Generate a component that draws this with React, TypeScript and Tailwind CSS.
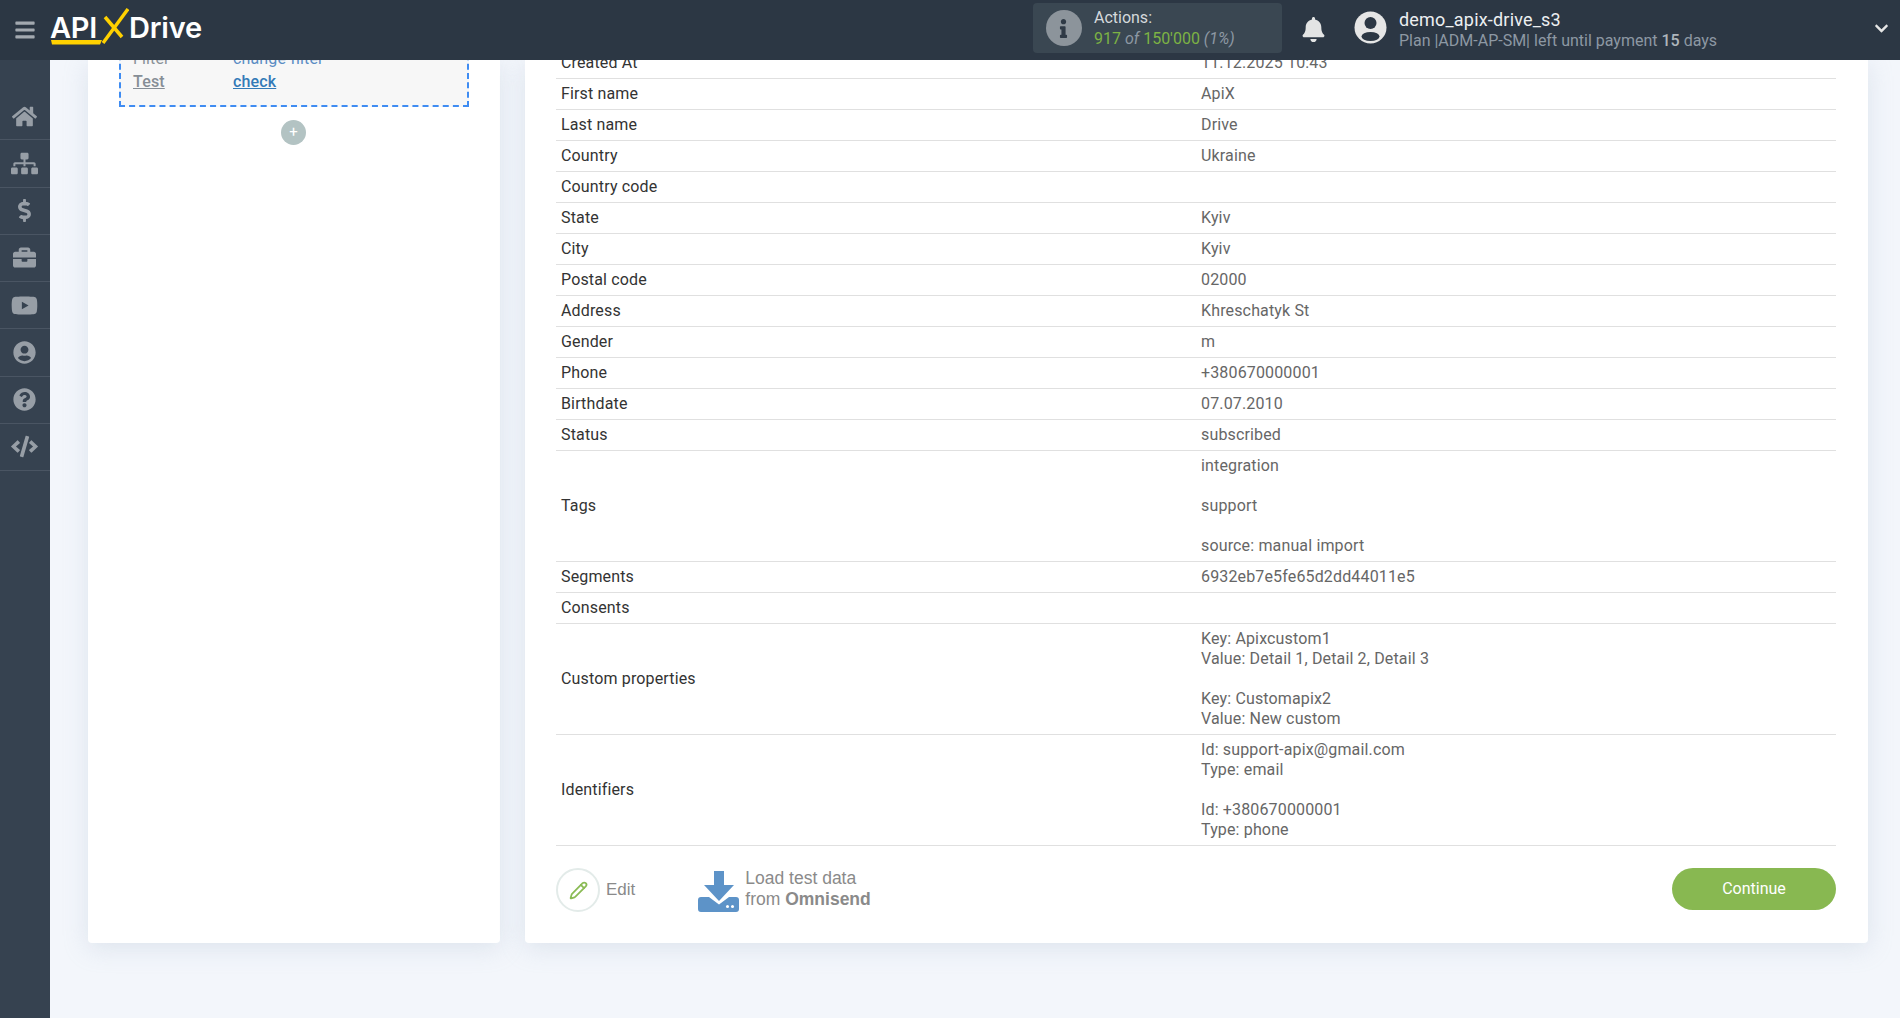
import React from 'react';
import {
  FaBars,
  FaBell,
  FaBriefcase,
  FaChevronDown,
  FaCode,
  FaDollarSign,
  FaHome,
  FaInfo,
  FaQuestionCircle,
  FaSitemap,
  FaUserCircle,
  FaYoutube,
} from 'react-icons/fa';
import { Pencil } from 'lucide-react';

const navItems = [
  { icon: FaHome, size: 25 },
  { icon: FaSitemap, size: 27 },
  { icon: FaDollarSign, size: 23 },
  { icon: FaBriefcase, size: 23 },
  { icon: FaYoutube, size: 27 },
  { icon: FaUserCircle, size: 23 },
  { icon: FaQuestionCircle, size: 23 },
  { icon: FaCode, size: 27 },
];

const rows: { label: string; value?: string[] }[] = [
  { label: 'Created At', value: ['11.12.2025 10:43'] },
  { label: 'First name', value: ['ApiX'] },
  { label: 'Last name', value: ['Drive'] },
  { label: 'Country', value: ['Ukraine'] },
  { label: 'Country code' },
  { label: 'State', value: ['Kyiv'] },
  { label: 'City', value: ['Kyiv'] },
  { label: 'Postal code', value: ['02000'] },
  { label: 'Address', value: ['Khreschatyk St'] },
  { label: 'Gender', value: ['m'] },
  { label: 'Phone', value: ['+380670000001'] },
  { label: 'Birthdate', value: ['07.07.2010'] },
  { label: 'Status', value: ['subscribed'] },
  { label: 'Tags', value: ['integration', '', 'support', '', 'source: manual import'] },
  { label: 'Segments', value: ['6932eb7e5fe65d2dd44011e5'] },
  { label: 'Consents' },
  { label: 'Custom properties', value: ['Key: Apixcustom1', 'Value: Detail 1, Detail 2, Detail 3', '', 'Key: Customapix2', 'Value: New custom'] },
  { label: 'Identifiers', value: ['Id: support-apix@gmail.com', 'Type: email', '', 'Id: +380670000001', 'Type: phone'] },
];

const Logo = () => (
  <div className="relative flex items-center h-[60px] pb-[5px] font-['Inter',sans-serif] font-semibold text-[29px] text-white">
    <span className="relative w-[52px] tracking-[-0.3px]">
      API
      <svg className="absolute left-0 top-[34px]" width="52" height="5" viewBox="0 0 52 5">
        <polygon points="1,0 52,0 50,4.500 2,4.500" fill="#ffd100" />
      </svg>
    </span>
    <svg className="shrink-0 self-start mt-[8px]" width="27" height="36" viewBox="0 0 27 36">
      <path d="M1 35 L26 1" stroke="#ffd100" strokeWidth="3.500" fill="none" />
      <path d="M3 9 L20 29" stroke="#ffd100" strokeWidth="3.500" fill="none" />
    </svg>
    <span className="tracking-[-0.2px]">Drive</span>
  </div>
);

const UserAvatar = () => (
  <svg width="33" height="33" viewBox="0 0 33 33" className="shrink-0">
    <circle cx="16.500" cy="16.500" r="16" fill="#e6e6e6" />
    <ellipse cx="16.500" cy="12" rx="6" ry="6" fill="#2c3744" />
    <ellipse cx="16.500" cy="25.500" rx="9" ry="4.500" fill="#2c3744" />
  </svg>
);

const DownloadIcon = () => (
  <svg width="41" height="41" viewBox="0 0 41 41" className="shrink-0">
    <path d="M0 29 a3 3 0 0 1 3 -3 h8 l10 7.500 l10 -7.500 h7 a3 3 0 0 1 3 3 v9 a3 3 0 0 1 -3 3 h-35 a3 3 0 0 1 -3 -3 z" fill="#5d93c8" />
    <path d="M16 0 h10 v14 h10 l-15 16 l-15 -16 h10 z" fill="#5d93c8" />
    <circle cx="29.500" cy="35.500" r="1.500" fill="#fff" />
    <circle cx="34.500" cy="35.500" r="1.500" fill="#fff" />
  </svg>
);

export default function App() {
  return (
    <div className="h-screen w-full overflow-hidden flex flex-col bg-[#f3f6fb] font-['Roboto',sans-serif]">
      <header className="h-[60px] shrink-0 flex items-center bg-[#2c3744] relative z-10">
        <button className="w-[50px] flex justify-center text-[#a3a9b0] pr-[1px]">
          <FaBars size={22} />
        </button>
        <Logo />

        <div className="ml-[831px] w-[249px] h-[50px] -mt-[4px] rounded-[4px] bg-[#3a4752] flex items-center pl-[13px]">
          <div className="w-[36px] h-[36px] rounded-full bg-[#8c949b] flex items-center justify-center text-[#2f3a46]">
            <FaInfo size={19} />
          </div>
          <div className="ml-[12px] text-[16px] leading-[21px]">
            <div className="text-[#d5d9dc]">Actions:</div>
            <div className="text-[#7db244]">
              917 <span className="italic text-[#8d98a3]">of</span> 150'000 <span className="italic text-[#8d98a3]">(1%)</span>
            </div>
          </div>
        </div>

        <div className="ml-[19px] text-[#e3e4e4] -mt-[1px]">
          <FaBell size={25} />
        </div>

        <div className="ml-[28px] -mt-[6px]">
          <UserAvatar />
        </div>
        <div className="ml-[12px] -mt-[1px]">
          <div className="text-[18px] leading-[21px] tracking-[0.2px] text-[#eceff1]">demo_apix-drive_s3</div>
          <div className="text-[16px] leading-[21px] text-[#8d98a3]">
            Plan |ADM-AP-SM| left until payment <b className="font-medium text-[#aeb5bc]">15</b> days
          </div>
        </div>
        <div className="ml-auto mr-[11px] text-[#e6e6e6] -mt-[4px]">
          <FaChevronDown size={15} />
        </div>
      </header>

      <div className="flex-1 min-h-0 flex">
        <aside className="w-[50px] shrink-0 bg-[#364250] pt-[33px]">
          {navItems.map(({ icon: Icon, size }, i) => (
            <div key={i} className="h-[47.25px] flex items-center justify-center border-b border-[#4a5563] text-[#979ea6] pr-[1px]">
              <Icon size={size} />
            </div>
          ))}
        </aside>

        <main className="flex-1 min-w-0 flex gap-[25px] pl-[38px] pr-[32px] pb-[75px] overflow-hidden">
          <section className="w-[412px] shrink-0 bg-white rounded-b-[4px] shadow-[0_5px_25px_rgba(170,185,205,0.3)] px-[31px] text-[16px] tracking-[0.15px]">
            <div className="-mt-[15px] w-[350px] h-[62px] border-2 border-dashed border-[#3f8cf2] bg-[#f7f7f7] pl-[12px]">
              <div className="flex h-[23px] items-center text-[#8a9298]">
                <span className="w-[100px]">Filter</span>
                <span className="text-[#5b8dc4]">change filter</span>
              </div>
              <div className="flex h-[23px] items-center font-medium">
                <span className="w-[100px] underline text-[#868e96]">Test</span>
                <span className="underline text-[#337ab7]">check</span>
              </div>
            </div>
            <div className="mt-[13px] ml-[162px] w-[25px] h-[25px] rounded-full bg-[#b3c3c3] text-white flex items-center justify-center text-[15px] leading-none">
              +
            </div>
          </section>

          <section className="flex-1 min-w-0 bg-white rounded-b-[4px] shadow-[0_5px_25px_rgba(170,185,205,0.3)] pl-[31px] pr-[32px] overflow-hidden">
            <table className="-mt-[12px] w-full table-fixed border-collapse text-[16px] leading-[20px] tracking-[0.15px]">
              <tbody>
                {rows.map((row) => (
                  <tr key={row.label} className="border-b border-[#e0e0e0]">
                    <td className="w-1/2 px-[5px] py-[5px] align-middle text-[#333333]">{row.label}</td>
                    <td className="px-[5px] py-[5px] align-middle text-[#666666]">
                      {row.value ? (
                        row.value.map((line, i) => <div key={i} className="min-h-[20px]">{line}</div>)
                      ) : (
                        <div className="h-[20px]" />
                      )}
                    </td>
                  </tr>
                ))}
              </tbody>
            </table>

            <div className="mt-[22px] flex items-center">
              <div className="w-[44px] h-[44px] rounded-full border-2 border-[#e3ebe9] flex items-center justify-center text-[#8abb55]">
                <Pencil size={19} strokeWidth={2.2} />
              </div>
              <span className="ml-[6px] font-['Liberation_Sans',sans-serif] text-[17px] text-[#8a8a8a]">Edit</span>
              <div className="ml-[63px] mt-[3px] flex">
                <DownloadIcon />
              </div>
              <div className="ml-[6px] -mt-[2px] font-['Liberation_Sans',sans-serif] text-[17.5px] leading-[21px] text-[#8a8a8a]">
                Load test data
                <br />
                from <b className="font-bold">Omnisend</b>
              </div>
              <button className="ml-auto self-start w-[164px] h-[42px] rounded-full bg-[#88b851] text-white text-[16px]">Continue</button>
            </div>
          </section>
        </main>
      </div>
    </div>
  );
}
